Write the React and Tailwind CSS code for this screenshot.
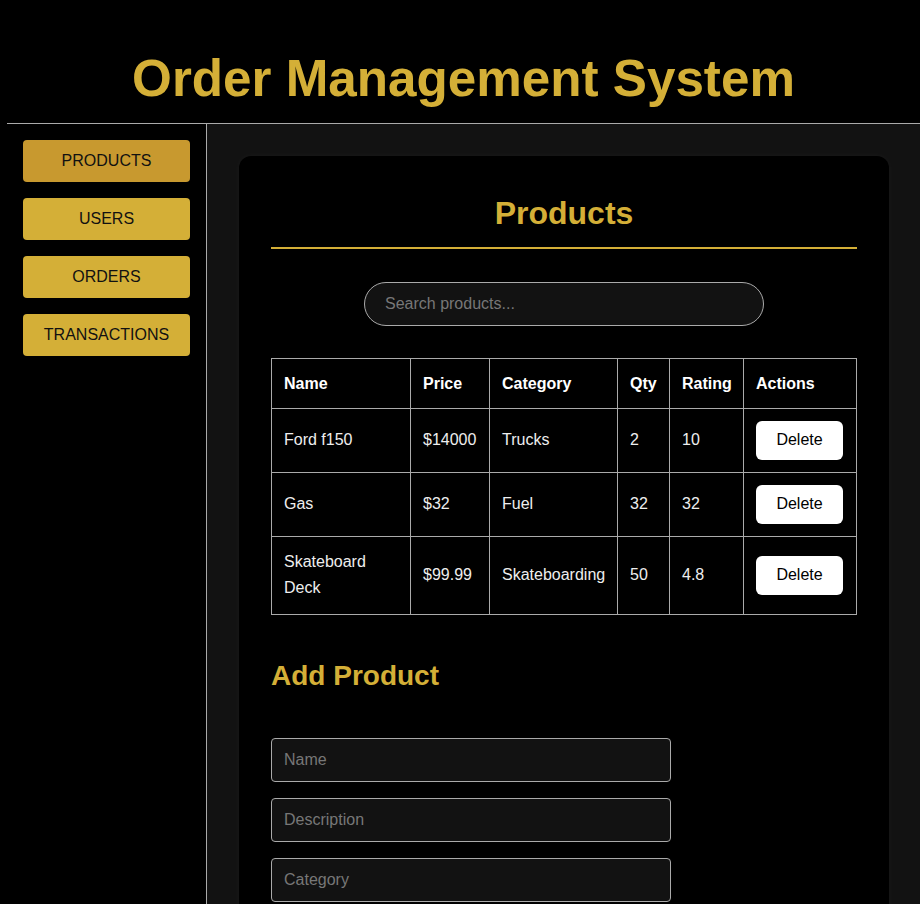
import React, { useState } from 'react';

const products = [
  { name: 'Ford f150', price: '$14000', category: 'Trucks', qty: 2, rating: 10 },
  { name: 'Gas', price: '$32', category: 'Fuel', qty: 32, rating: 32 },
  { name: 'Skateboard Deck', price: '$99.99', category: 'Skateboarding', qty: 50, rating: 4.8 },
];

const tabs = ['PRODUCTS', 'USERS', 'ORDERS', 'TRANSACTIONS'];

const App = () => {
  const [active, setActive] = useState('PRODUCTS');

  return (
    <div className="min-h-screen bg-black font-['Liberation_Sans',Arial,sans-serif] text-white">
      {/* header */}
      <header className="ml-[7px] border-b border-[#aaa] pt-[48px] pb-[14px] text-center">
        <h1 className="text-[51.2px] leading-[61px] font-bold text-[#d4af37]">Order Management System</h1>
      </header>

      <div className="ml-[7px] flex min-h-[780px]">
        {/* sidebar */}
        <aside className="w-[200px] shrink-0 border-r border-[#aaa] p-4 flex flex-col gap-4">
          {tabs.map((t) => (
            <button
              key={t}
              onClick={() => setActive(t)}
              className={`h-[42px] w-full rounded-[4px] text-base text-[#111] flex items-center justify-center ${
                active === t ? 'bg-[#c8992f]' : 'bg-[#d4af37]'
              }`}
            >
              {t}
            </button>
          ))}
        </aside>

        {/* main */}
        <main className="flex-1 bg-[#121212] pl-8 pr-[33px] py-8">
          <div className="bg-black rounded-xl px-8 pt-[38px] pb-8 min-h-[800px] shadow-[0_0_6px_rgba(255,255,255,0.04)]">
            <h2 className="text-[32px] leading-[38px] font-bold text-[#d4af37] text-center pb-[15px] border-b-2 border-[#d4af37]">
              Products
            </h2>

            <div className="flex justify-center mt-[33px]">
              <input
                placeholder="Search products..."
                className="w-[400px] h-[44px] rounded-full border border-[#aaa] bg-[#121212] px-5 text-base text-white placeholder:text-[#777] outline-none"
              />
            </div>

            <table className="mt-8 w-full table-fixed border-collapse text-base leading-[1.6]">
              <colgroup>
                <col className="w-[139px]" />
                <col className="w-[79px]" />
                <col className="w-[128px]" />
                <col className="w-[52px]" />
                <col className="w-[74px]" />
                <col className="w-[113px]" />
              </colgroup>
              <thead>
                <tr>
                  {['Name', 'Price', 'Category', 'Qty', 'Rating', 'Actions'].map((h) => (
                    <th key={h} className="border border-[#aaa] px-3 py-[11.5px] text-left font-bold text-white">
                      {h}
                    </th>
                  ))}
                </tr>
              </thead>
              <tbody className="text-[#eee] leading-[26.5px]">
                {products.map((p) => (
                  <tr key={p.name}>
                    <td className="border border-[#aaa] p-3">{p.name}</td>
                    <td className="border border-[#aaa] p-3">{p.price}</td>
                    <td className="border border-[#aaa] p-3">{p.category}</td>
                    <td className="border border-[#aaa] p-3">{p.qty}</td>
                    <td className="border border-[#aaa] p-3">{p.rating}</td>
                    <td className="border border-[#aaa] p-3">
                      <button className="h-[39px] w-[87px] rounded-[6px] bg-white text-black text-base leading-[22px] align-middle">
                        Delete
                      </button>
                    </td>
                  </tr>
                ))}
              </tbody>
            </table>

            <h3 className="mt-[44px] text-[28px] leading-[34px] font-bold text-[#d4af37]">Add Product</h3>

            <div className="mt-[45px] flex flex-col gap-4">
              {['Name', 'Description', 'Category', 'Price', 'Quantity'].map((f) => (
                <input
                  key={f}
                  placeholder={f}
                  className="w-[400px] h-[44px] rounded-[4px] border border-[#aaa] bg-[#121212] px-3 text-base text-white placeholder:text-[#777] outline-none"
                />
              ))}
            </div>
          </div>
        </main>
      </div>
    </div>
  );
};

export default App;
